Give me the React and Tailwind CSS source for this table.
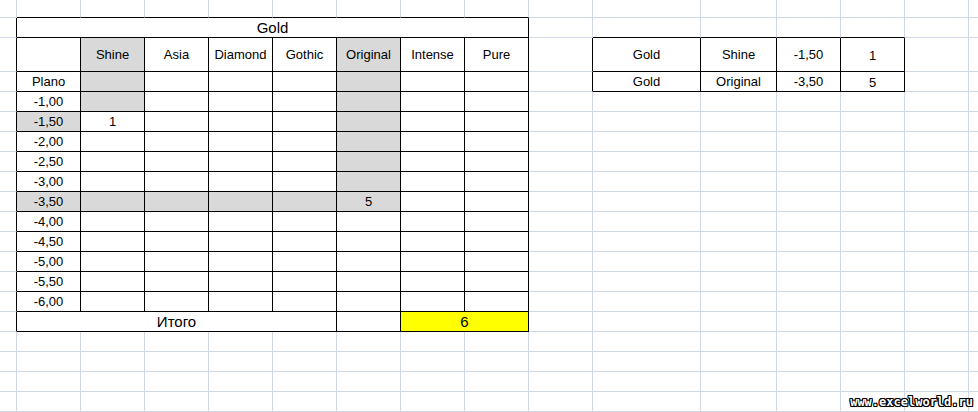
import React from "react";

const HEAD = ["", "Shine", "Asia", "Diamond", "Gothic", "Original", "Intense", "Pure"];
const LABELS = ["Plano", "-1,00", "-1,50", "-2,00", "-2,50", "-3,00", "-3,50", "-4,00", "-4,50", "-5,00", "-5,50", "-6,00"];
const RIGHT = [
  ["Gold", "Shine", "-1,50", "1"],
  ["Gold", "Original", "-3,50", "5"],
];

const SPAN = { 1: "", 2: "col-span-2", 5: "col-span-5", 8: "col-span-8" };

function isGray(r, c) {
  return (
    (c === 2 && r >= 2 && r <= 4) ||
    (c === 1 && r === 5) ||
    (c === 6 && r >= 2 && r <= 9) ||
    (r === 9 && c >= 1 && c <= 6)
  );
}

function buildCells() {
  const cells = [];
  for (let r = 0; r < 20; r++) {
    for (let c = 0; c < 16; c++) {
      if (r === 1 && c >= 2 && c <= 8) continue;
      if (r === 15 && c >= 2 && c <= 5) continue;
      if (r === 15 && c === 8) continue;
      let span = 1;
      let text = "";
      let big = false;
      let num = false;
      let bg = "bg-white";
      if (r === 1 && c === 1) { span = 8; text = "Gold"; big = true; }
      if (r === 15 && c === 1) { span = 5; text = "Итого"; big = true; }
      if (r === 15 && c === 7) { span = 2; text = "6"; big = true; bg = "bg-[#ffff00]"; }
      if (r === 2 && c >= 1 && c <= 8) text = HEAD[c - 1];
      if (r >= 3 && r <= 14 && c === 1) text = LABELS[r - 3];
      if (r === 5 && c === 2) text = "1";
      if (r === 9 && c === 6) text = "5";
      if (isGray(r, c)) bg = "bg-[#d9d9d9]";
      if (r >= 2 && r <= 3 && c >= 10 && c <= 13) {
        text = RIGHT[r - 2][c - 10];
        if (c === 13) num = true;
      }
      const lastC = c + span - 1;
      const inLeft = r >= 1 && r <= 15 && c >= 1 && lastC <= 8;
      const inRight = r >= 2 && r <= 3 && c >= 10 && c <= 13;
      const rightBlack = inLeft || inRight || (c === 0 && r >= 1 && r <= 15) || (c === 9 && r >= 2 && r <= 3);
      const bottomBlack = inLeft || inRight || (r === 0 && c >= 1 && c <= 8) || (r === 1 && c >= 10 && c <= 13);
      const rb = c === 15 ? "" : rightBlack ? "border-r border-r-black" : "border-r border-r-[#d0d7e5]";
      const bb = bottomBlack ? "border-b border-b-black" : "border-b border-b-[#d0d7e5]";
      cells.push(
        <div
          key={r + "-" + c}
          className={`${SPAN[span]} ${rb} ${bb} ${bg} flex items-center justify-center overflow-hidden whitespace-nowrap ${big ? "text-[15px] leading-[17px]" : "text-[13px] leading-[15px]"} ${num ? "pt-[2px]" : ""}`}
        >
          {text}
        </div>
      );
    }
  }
  return cells;
}

export default function App() {
  return (
    <div className="relative w-[978px] h-[412px] overflow-hidden bg-white text-black font-['Liberation_Sans',Arial,sans-serif]">
      <div className="grid grid-cols-[17px_repeat(9,64px)_108px_76px_repeat(3,64px)_1fr] grid-rows-[18px_20px_34px_repeat(17,20px)] w-full h-full">
        {buildCells()}
      </div>
      <div className="absolute right-[5px] bottom-[3px] font-['DejaVu_Sans_Mono',monospace] font-bold text-[12px] leading-[13px] text-white [text-shadow:1px_0_0_#000,-1px_0_0_#000,0_1px_0_#000,0_-1px_0_#000,1px_1px_0_#000,-1px_-1px_0_#000,1px_-1px_0_#000,-1px_1px_0_#000]">
        www.excelworld.ru
      </div>
    </div>
  );
}
